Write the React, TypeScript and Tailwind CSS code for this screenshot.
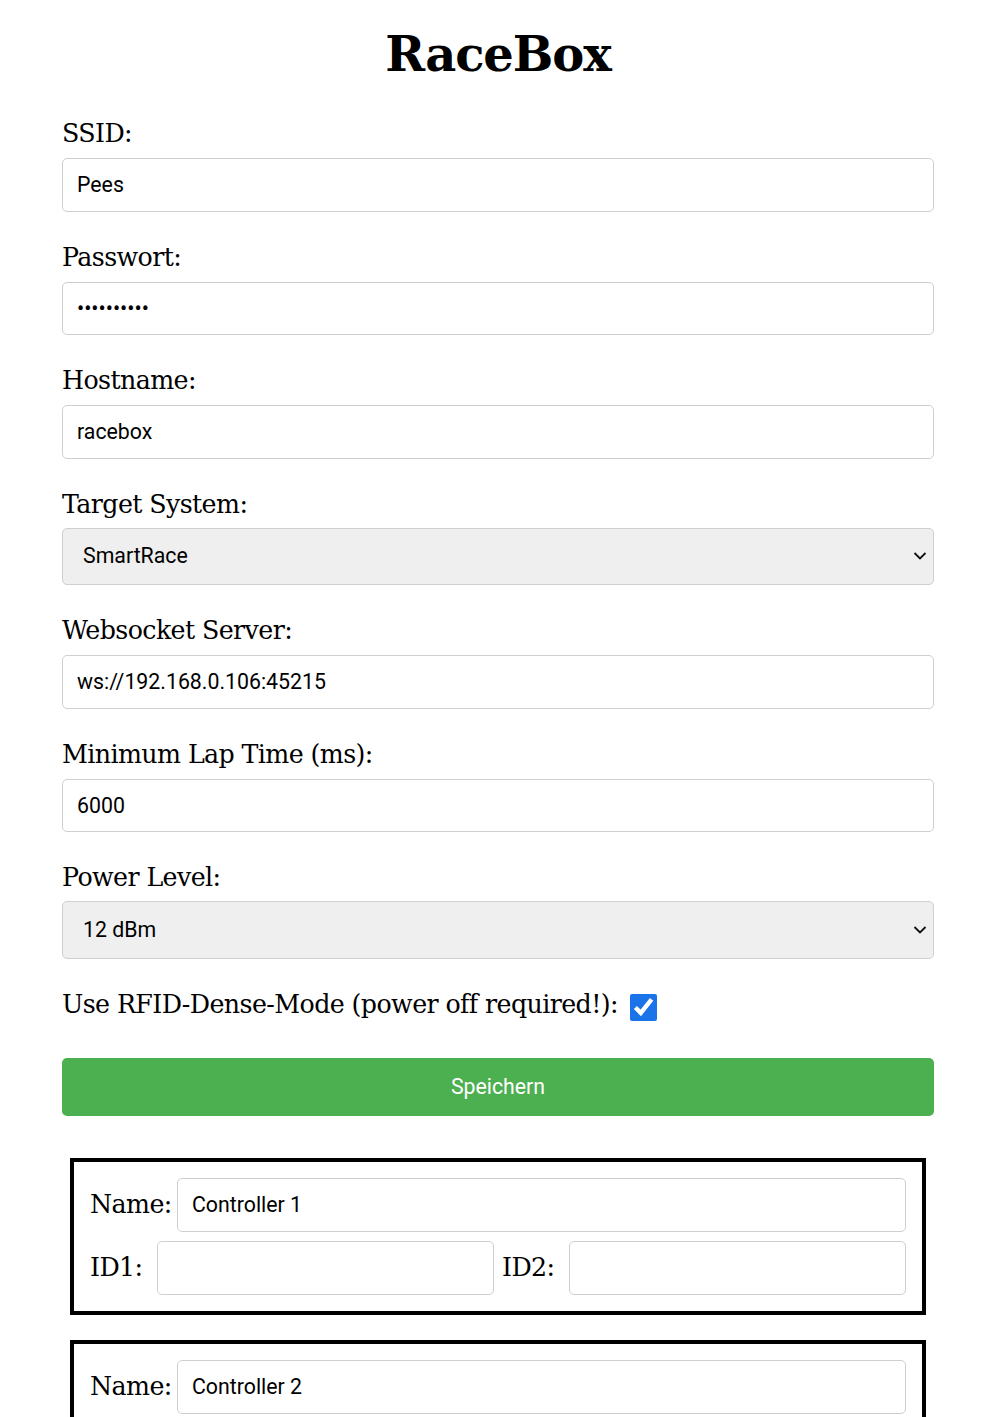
import { useState } from 'react'

const serif = "font-['DejaVu_Serif','Liberation_Serif',serif]"
const sans = "font-['Roboto','Liberation_Sans',sans-serif]"
const labelText = `${serif} text-[25.3px] tracking-[-0.6px] text-black`

function Field({ label, value, type = 'text' }: { label: string; value: string; type?: string }) {
  return (
    <div className="mb-[31px]">
      <label className={`${labelText} block leading-[30px] mb-[9px]`}>{label}</label>
      <input
        type={type}
        defaultValue={value}
        className={`${sans} block w-full h-[53.5px] px-[14px] border border-[#cfcfcf] rounded-[5px] text-[21.3px] text-black bg-white outline-none`}
      />
    </div>
  )
}

function SelectField({ label, value, options }: { label: string; value: string; options: string[] }) {
  return (
    <div className="mb-[31px]">
      <label className={`${labelText} block leading-[30px] mb-[8px]`}>{label}</label>
      <div className="relative">
        <select
          defaultValue={value}
          className={`${sans} appearance-none block w-full h-[57.5px] pl-[20px] pr-[40px] border border-[#cfcfcf] rounded-[5px] text-[21.3px] text-black bg-[#efefef] outline-none`}
        >
          {options.map((o) => (
            <option key={o}>{o}</option>
          ))}
        </select>
        <svg
          className="absolute right-[7px] top-1/2 -translate-y-1/2 pointer-events-none"
          width="14"
          height="9"
          viewBox="0 0 14 9"
          fill="none"
        >
          <path d="M1.5 1.5 L7 7 L12.5 1.5" stroke="#111" strokeWidth="1.8" />
        </svg>
      </div>
    </div>
  )
}

function Controller({ name }: { name: string }) {
  return (
    <div className="mx-[8px] mb-[25px] border-4 border-black px-[16px] pt-[16px] pb-[16px]">
      <div className="flex items-center mb-[9px]">
        <span className={`${labelText} w-[87px] shrink-0`}>Name:</span>
        <input
          defaultValue={name}
          className={`${sans} flex-1 min-w-0 h-[54px] px-[14px] border border-[#cfcfcf] rounded-[5px] text-[21.3px] text-black outline-none`}
        />
      </div>
      <div className="flex items-center">
        <span className={`${labelText} w-[67px] shrink-0`}>ID1:</span>
        <input
          className={`${sans} flex-1 min-w-0 h-[54px] px-[14px] mr-[8px] border border-[#cfcfcf] rounded-[5px] text-[21.3px] outline-none`}
        />
        <span className={`${labelText} w-[67px] shrink-0`}>ID2:</span>
        <input
          className={`${sans} flex-1 min-w-0 h-[54px] px-[14px] border border-[#cfcfcf] rounded-[5px] text-[21.3px] outline-none`}
        />
      </div>
    </div>
  )
}

export default function App() {
  const [dense, setDense] = useState(true)

  return (
    <div className="min-h-screen bg-white">
      <div className="w-[872px] ml-[62px] pt-[24px]">
        <h1 className={`${serif} text-center font-bold text-[48px] tracking-[-1.1px] leading-[60px] mb-[35px] text-black`}>RaceBox</h1>

        <Field label="SSID:" value="Pees" />
        <Field label="Passwort:" value="••••••••••" type="password" />
        <Field label="Hostname:" value="racebox" />
        <SelectField label="Target System:" value="SmartRace" options={['SmartRace', 'Carrera AppConnect']} />
        <Field label="Websocket Server:" value="ws://192.168.0.106:45215" />
        <Field label="Minimum Lap Time (ms):" value="6000" />
        <SelectField label="Power Level:" value="12 dBm" options={['10 dBm', '12 dBm', '15 dBm', '20 dBm']} />

        <div className="flex items-center h-[30px] mt-[2px] mb-[38px]">
          <label className={`${labelText} leading-[30px]`}>Use RFID-Dense-Mode (power off required!):</label>
          <input
            type="checkbox"
            checked={dense}
            onChange={(e) => setDense(e.target.checked)}
            className="ml-[12px] mt-[6px] w-[27px] h-[27px] accent-[#1a73e8]"
          />
        </div>

        <button className={`${sans} block w-full h-[58px] mb-[42px] rounded-[5px] bg-[#4caf50] text-white text-[21.3px]`}>
          Speichern
        </button>

        <Controller name="Controller 1" />
        <Controller name="Controller 2" />
      </div>
    </div>
  )
}
